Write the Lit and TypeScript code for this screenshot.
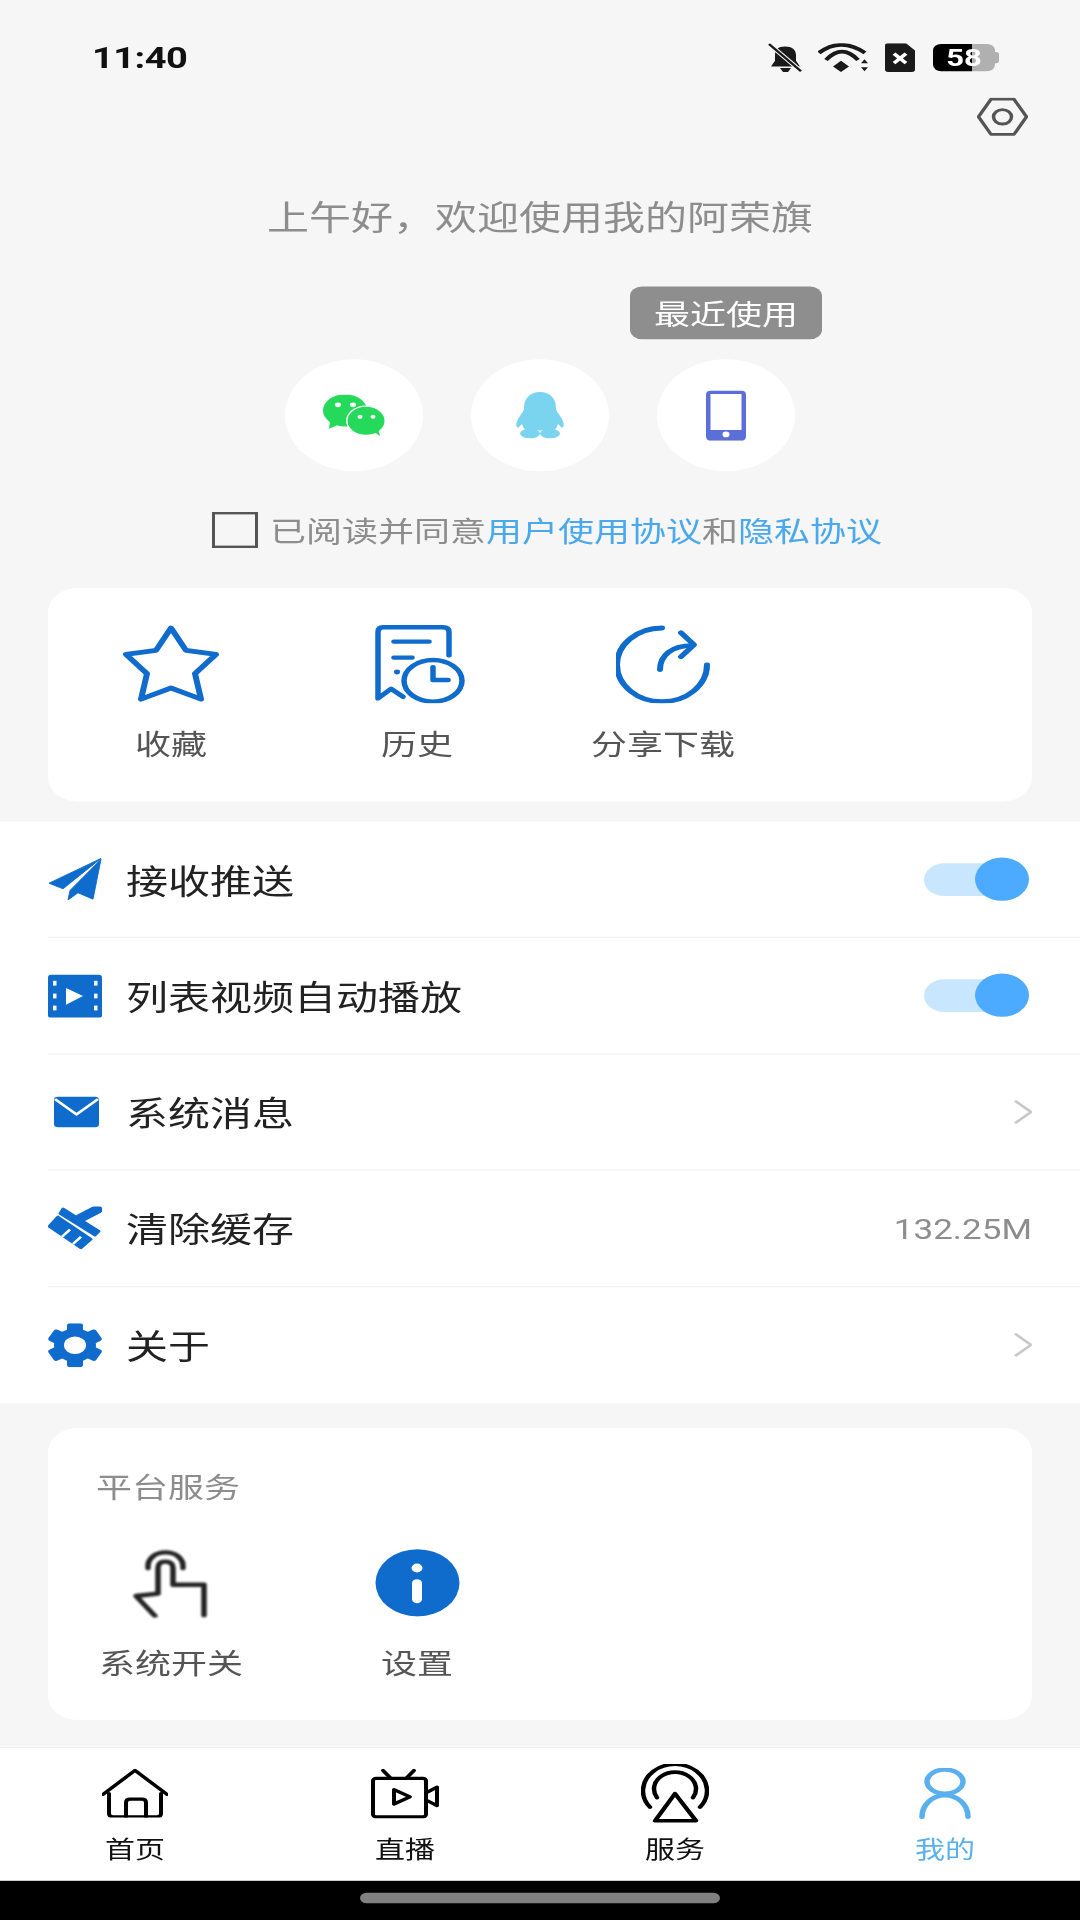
import { LitElement, html, css, svg } from "lit";
import { customElement } from "lit/decorators.js";

const BLUE = "#0f6bcc";

const icon = (w: number, h: number, body: unknown) => html`<svg class="ic" width=${w} height=${h} viewBox="0 0 ${w} ${h}">${body}</svg>`;

const star = icon(98, 98, svg`<polygon points="49,4 64,32 94,37 73,61 79,93 49,79 19,93 25,61 4,37 34,32" fill="none" stroke=${BLUE} stroke-width="6" stroke-linejoin="round"/>`);
const history = html`<svg class="ic hist" width="90" height="98" viewBox="0 0 90 98"><g fill="none" stroke=${BLUE} stroke-width="5.500" stroke-linecap="round" stroke-linejoin="round">
  <path d="M74 38V9Q74 3 68 3H8Q3 3 3 9V92L16 80L28 90"/>
  <path d="M19 21H54M19 41H37"/><ellipse cx="58" cy="70" rx="29" ry="26"/><path d="M58 53V69H73"/></g>
  <circle cx="22" cy="59" r="3" fill=${BLUE}/></svg>`;
const share = icon(94, 98, svg`<g fill="none" stroke=${BLUE} stroke-width="6" stroke-linecap="round" stroke-linejoin="round">
  <path d="M46 4A45 46 0 1 0 91 50"/><path d="M44 56C44 38 56 26 76 26"/><path d="M65 10L78 25L65 40"/></g>`);

const send = icon(54, 54, svg`<path fill=${BLUE} stroke=${BLUE} stroke-width="1" stroke-linejoin="round" d="M53 1L1 32L15 39ZM53 2L22 41L20 53L30 44L45 52Z"/>`);
const video = icon(54, 54, svg`<rect width="54" height="55" rx="4" fill=${BLUE}/>
  <g fill="#fff"><rect x="5" y="8" width="3.500" height="6"/><rect x="5" y="24" width="3.500" height="6"/><rect x="5" y="39" width="3.500" height="6"/>
  <rect x="46" y="8" width="3.500" height="6"/><rect x="46" y="24" width="3.500" height="6"/><rect x="46" y="39" width="3.500" height="6"/>
  <polygon points="18,17 35,27 18,38"/></g>`);
const mail = icon(54, 54, svg`<rect x="6" y="8" width="45" height="38" rx="4" fill=${BLUE}/><path d="M7 11L28.500 30L50 11" fill="none" stroke="#fff" stroke-width="3"/>`);
const broom = icon(54, 54, svg`<g fill=${BLUE} stroke=${BLUE} stroke-width="3" stroke-linejoin="round">
  <polygon points="15,3 51,31 47,36 12,9"/>
  <polygon points="10,13 43,41 33,52 1,25"/></g>
  <path d="M32 15L49 4" stroke=${BLUE} stroke-width="11" stroke-linecap="round"/>
  <path d="M22 29L14 38M33 38L25 47" stroke="#fff" stroke-width="2.800"/>`);
const gear = icon(54, 55, svg`<g fill=${BLUE}>${[0, 60, 120, 180, 240, 300].map(
  (a) => svg`<rect x="19" y="0" width="16" height="14" rx="3" transform="rotate(${a} 27 27.500)"/>`
)}<circle cx="27" cy="27.500" r="21"/></g><circle cx="27" cy="27.500" r="11" fill="#fff"/>`);

const touch = html`<svg class="ic blur" width="78" height="87" viewBox="0 0 78 87"><g fill="none" stroke="#222" stroke-width="5.500" stroke-linejoin="round" stroke-linecap="round">
  <path d="M16 25C14 -1 53 -1 51 25"/><path d="M26 56V25Q26 17 33 17Q41 17 41 25V46H72V84"/><path d="M26 57L4 60L23 85"/></g></svg>`;
const info = icon(85, 85, svg`<circle cx="42.500" cy="42.500" r="42" fill=${BLUE}/><circle cx="42" cy="24" r="5.500" fill="#fff"/><rect x="37" y="38" width="10" height="30" rx="5" fill="#fff"/>`);

const hex = icon(51, 48, svg`<g fill="none" stroke="#555" stroke-width="3.500" stroke-linejoin="round"><polygon points="1.500,24 14,2 37,2 49.500,24 37,46 14,46"/><circle cx="25.500" cy="24" r="9"/></g>`);

const bell = icon(35, 36, svg`<path fill="#1a1a1a" d="M17 4C10 4 7 8 7 15V22L3 29H32L28 22V15C28 8 24 4 17 4ZM12 31H23L20 36H15Z"/><path d="M1 1L33 35" stroke="#f6f6f6" stroke-width="5"/><path d="M1 1L33 35" stroke="#1a1a1a" stroke-width="2.500"/>`);
const wifi = icon(52, 36, svg`<g fill="none" stroke="#1a1a1a" stroke-width="4.500"><path d="M1 12Q23 -8 47 12"/><path d="M8 21Q24 0 40 21"/></g>
  <path fill="#1a1a1a" d="M15 29L23 22L31 29L23 36ZM43 25L46.500 20L50 25ZM43 30L50 30L46.500 35Z"/>`);
const sim = icon(30, 36, svg`<path fill="#1a1a1a" d="M3 0H21L30 9V33Q30 36 27 36H3Q0 36 0 33V3Q0 0 3 0Z"/><path d="M9 13L21 25M21 13L9 25" stroke="#fff" stroke-width="4"/>`);

const wechat = icon(62, 52, svg`<g fill="#25d95a"><ellipse cx="22" cy="20" rx="22" ry="20"/><path d="M7 33L6 43L17 37Z"/></g>
  <g fill="#fff"><circle cx="15" cy="13" r="3"/><circle cx="30" cy="13" r="3"/></g>
  <ellipse cx="43" cy="33" rx="20" ry="19" fill="#fff"/><g fill="#25d95a"><ellipse cx="43" cy="33" rx="18.500" ry="17.500"/><path d="M50 46L57 52L55 42Z"/></g>
  <g fill="#fff"><circle cx="37" cy="28" r="2.500"/><circle cx="50" cy="28" r="2.500"/></g>`);
const qq = icon(48, 58, svg`<g fill="#7ad4f0"><path d="M24 0C34 0 40 8 40 20C40 24 42 26 44 30C47 35 49 42 47 44C46 45 44 43 42 40C41 44 40 46 38 48H10C8 46 7 44 6 40C4 43 2 45 1 44C-1 42 1 35 4 30C6 26 8 24 8 20C8 8 14 0 24 0Z"/><ellipse cx="14" cy="52" rx="10" ry="6"/><ellipse cx="34" cy="52" rx="10" ry="6"/></g>`);
const phone = icon(40, 63, svg`<rect width="40" height="63" rx="5" fill="#5b6fd8"/><rect x="4.500" y="4.500" width="31" height="45" fill="#fff"/><circle cx="20" cy="55" r="3.500" fill="#fff"/>`);

const home = icon(66, 61, svg`<g fill="none" stroke="#000" stroke-width="4" stroke-linecap="round" stroke-linejoin="round"><path d="M1 32L33 2L65 32"/><path d="M7 31V56Q7 60 11 60H55Q59 60 59 56V31"/><path d="M24 60V42Q24 38 28 38H40Q44 38 44 42V60"/></g>`);
const live = icon(68, 62, svg`<g fill="none" stroke="#000" stroke-width="4" stroke-linecap="round" stroke-linejoin="round"><rect x="2" y="12" width="53" height="48" rx="3"/><path d="M12 2L19 11M43 2L36 11"/><path d="M55 30L66 23V46L55 39"/><path d="M23 26L39 35L23 44Z"/></g>`);
const service = icon(68, 74, svg`<g fill="none" stroke="#000" stroke-width="4.500" stroke-linecap="round" stroke-linejoin="round"><path d="M9 54A32 33 0 1 1 59 54"/><path d="M16 42A21 21 0 1 1 52 42"/><path d="M34 37L14 71H55Z"/></g>`);
const me = icon(52, 64, svg`<g fill="none" stroke="#5ab0ef" stroke-width="5.500" stroke-linecap="round"><ellipse cx="26" cy="17" rx="18" ry="15"/><path d="M3 61A23 27 0 0 1 49 61"/></g>`);

const chevron = html`<svg class="ic" width="18" height="30" viewBox="0 0 18 30"><path d="M1 1L17 15L1 29" fill="none" stroke="#c8c8c8" stroke-width="3"/></svg>`;
const toggle = html`<div class="toggle"><div class="knob"></div></div>`;

const rows = [
  { icon: send, label: "接收推送", right: toggle },
  { icon: video, label: "列表视频自动播放", right: toggle },
  { icon: mail, label: "系统消息", right: chevron },
  { icon: broom, label: "清除缓存", right: html`<span class="size">132.25M</span>` },
  { icon: gear, label: "关于", right: chevron },
];

@customElement("app-root")
export class AppRoot extends LitElement {
  static styles = css`
    :host { display: block; width: 1080px; height: 1920px; overflow: hidden; font-family: "Noto Sans CJK SC", "Noto Sans", sans-serif; }
    .page { width: 1080px; height: 2400px; background: #f6f6f6; transform: scaleY(0.8); transform-origin: 0 0; display: flex; flex-direction: column; }
    .ic { display: block; flex: none; }
    .blur { filter: blur(1px); }
    .hist { margin-left: 6px; }
    .status { display: flex; align-items: center; justify-content: space-between; height: 36px; margin-top: 54px; padding: 0 85px 0 92px; }
    .time { font: 700 38px/36px Roboto, sans-serif; color: #111; letter-spacing: -0.5px; }
    .sicons { display: flex; align-items: center; }
    .sicons > :nth-child(2) { margin-left: 15px; }
    .sicons > :nth-child(3) { margin-left: 15px; }
    .batt { position: relative; margin-left: 18px; width: 62px; height: 34px; border-radius: 8px; background: linear-gradient(90deg, #000 39px, #b0b0b0 39px); color: #fff; font: 700 31px/34px Roboto, sans-serif; text-align: center; }
    .batt::after { content: ""; position: absolute; left: 62px; top: 10px; width: 4px; height: 14px; background: #b0b0b0; border-radius: 0 3px 3px 0; }
    .hexrow { display: flex; justify-content: flex-end; padding-right: 52px; margin-top: 32px; }
    .greet { margin-top: 70px; text-align: center; font-size: 42px; line-height: 60px; color: #8d8d8d; height: 60px; }
    .logins { display: flex; justify-content: center; gap: 48px; margin-top: 149px; }
    .circle { position: relative; width: 138px; height: 140px; border-radius: 50%; background: #fff; display: flex; align-items: center; justify-content: center; }
    .tip { position: absolute; left: 50%; bottom: 165px; transform: translateX(-50%); width: 192px; height: 66px; border-radius: 12px; background: #8e8e8e; color: #fff; font-size: 36px; line-height: 64px; text-align: center; white-space: nowrap; }
    .agree { display: flex; align-items: center; margin-top: 51px; padding-left: 212px; height: 45px; font-size: 36px; color: #8d8d8d; white-space: nowrap; }
    .agree span { margin-bottom: 2px; }
    .check { width: 46px; height: 45px; box-sizing: border-box; border: 3.5px solid #555; margin-right: 12px; flex: none; }
    .agree a { color: #4aa8ec; }
    .card { margin: 50px 48px 0; background: #fff; border-radius: 30px; }
    .grid { display: grid; grid-template-columns: repeat(4, 1fr); }
    .tool { display: flex; flex-direction: column; align-items: center; font-size: 36px; line-height: 50px; color: #555; }
    .iconbox { height: 98px; display: flex; align-items: center; }
    .tool span { margin-top: 24px; white-space: nowrap; }
    .tools { height: 267px; box-sizing: border-box; padding-top: 46px; }
    .list { margin-top: 25px; background: #fff; padding-left: 48px; }
    .row { height: 145.4px; box-sizing: border-box; display: flex; align-items: center; padding-right: 48px; border-bottom: 1.25px solid #ececec; font-size: 42px; color: #222; }
    .row:last-child { border-bottom: none; }
    .row .lab { margin-left: 24px; flex: 1; margin-bottom: 1px; }
    .size { font: 400 35px/1 Roboto, sans-serif; color: #8d8d8d; margin-top: 5px; }
    .toggle { position: relative; width: 105px; height: 41px; border-radius: 21px; background: #c9e6ff; margin-right: 3px; }
    .knob { position: absolute; right: 0; top: -7px; width: 54px; height: 54px; border-radius: 50%; background: #4cabff; }
    .svc { margin-top: 31px; height: 365px; box-sizing: border-box; padding-top: 47px; }
    .svc h2 { margin: 0 0 0 48px; font-weight: 400; font-size: 36px; line-height: 50px; color: #8d8d8d; }
    .svc .grid { margin-top: 53px; }
    .svc .iconbox { height: 87px; }
    .svc .tool span { margin-top: 30px; }
    .nav { margin-top: 34px; height: 167px; background: #fff; display: flex; border-top: 1px solid #eee; box-sizing: border-box; }
    .tab { flex: 1; display: flex; flex-direction: column; align-items: center; padding-top: 17px; font-size: 30px; line-height: 40px; color: #111; }
    .tab.on { color: #5ab0ef; }
    .tab .box { height: 80px; display: flex; align-items: center; margin-bottom: 8px; }
    .gesture { flex: 1; background: #000; display: flex; justify-content: center; padding-top: 15px; }
    .handle { width: 360px; height: 13px; border-radius: 7px; background: #808080; }
  `;

  render() {
    return html`<div class="page">
      <div class="status">
        <span class="time">11:40</span>
        <div class="sicons">${bell}${wifi}${sim}<div class="batt">58</div></div>
      </div>
      <div class="hexrow">${hex}</div>
      <div class="greet">上午好，欢迎使用我的阿荣旗</div>
      <div class="logins">
        <div class="circle">${wechat}</div>
        <div class="circle">${qq}</div>
        <div class="circle"><div class="tip">最近使用</div>${phone}</div>
      </div>
      <div class="agree"><div class="check"></div><span>已阅读并同意<a>用户使用协议</a>和<a>隐私协议</a></span></div>
      <div class="card tools"><div class="grid">
        <div class="tool"><div class="iconbox">${star}</div><span>收藏</span></div>
        <div class="tool"><div class="iconbox">${history}</div><span>历史</span></div>
        <div class="tool"><div class="iconbox">${share}</div><span>分享下载</span></div>
      </div></div>
      <div class="list">
        ${rows.map((r) => html`<div class="row">${r.icon}<span class="lab">${r.label}</span>${r.right}</div>`)}
      </div>
      <div class="card svc">
        <h2>平台服务</h2>
        <div class="grid">
          <div class="tool"><div class="iconbox">${touch}</div><span>系统开关</span></div>
          <div class="tool"><div class="iconbox">${info}</div><span>设置</span></div>
        </div>
      </div>
      <div class="nav">
        <div class="tab"><div class="box">${home}</div>首页</div>
        <div class="tab"><div class="box">${live}</div>直播</div>
        <div class="tab"><div class="box">${service}</div>服务</div>
        <div class="tab on"><div class="box">${me}</div>我的</div>
      </div>
      <div class="gesture"><div class="handle"></div></div>
    </div>`;
  }
}
